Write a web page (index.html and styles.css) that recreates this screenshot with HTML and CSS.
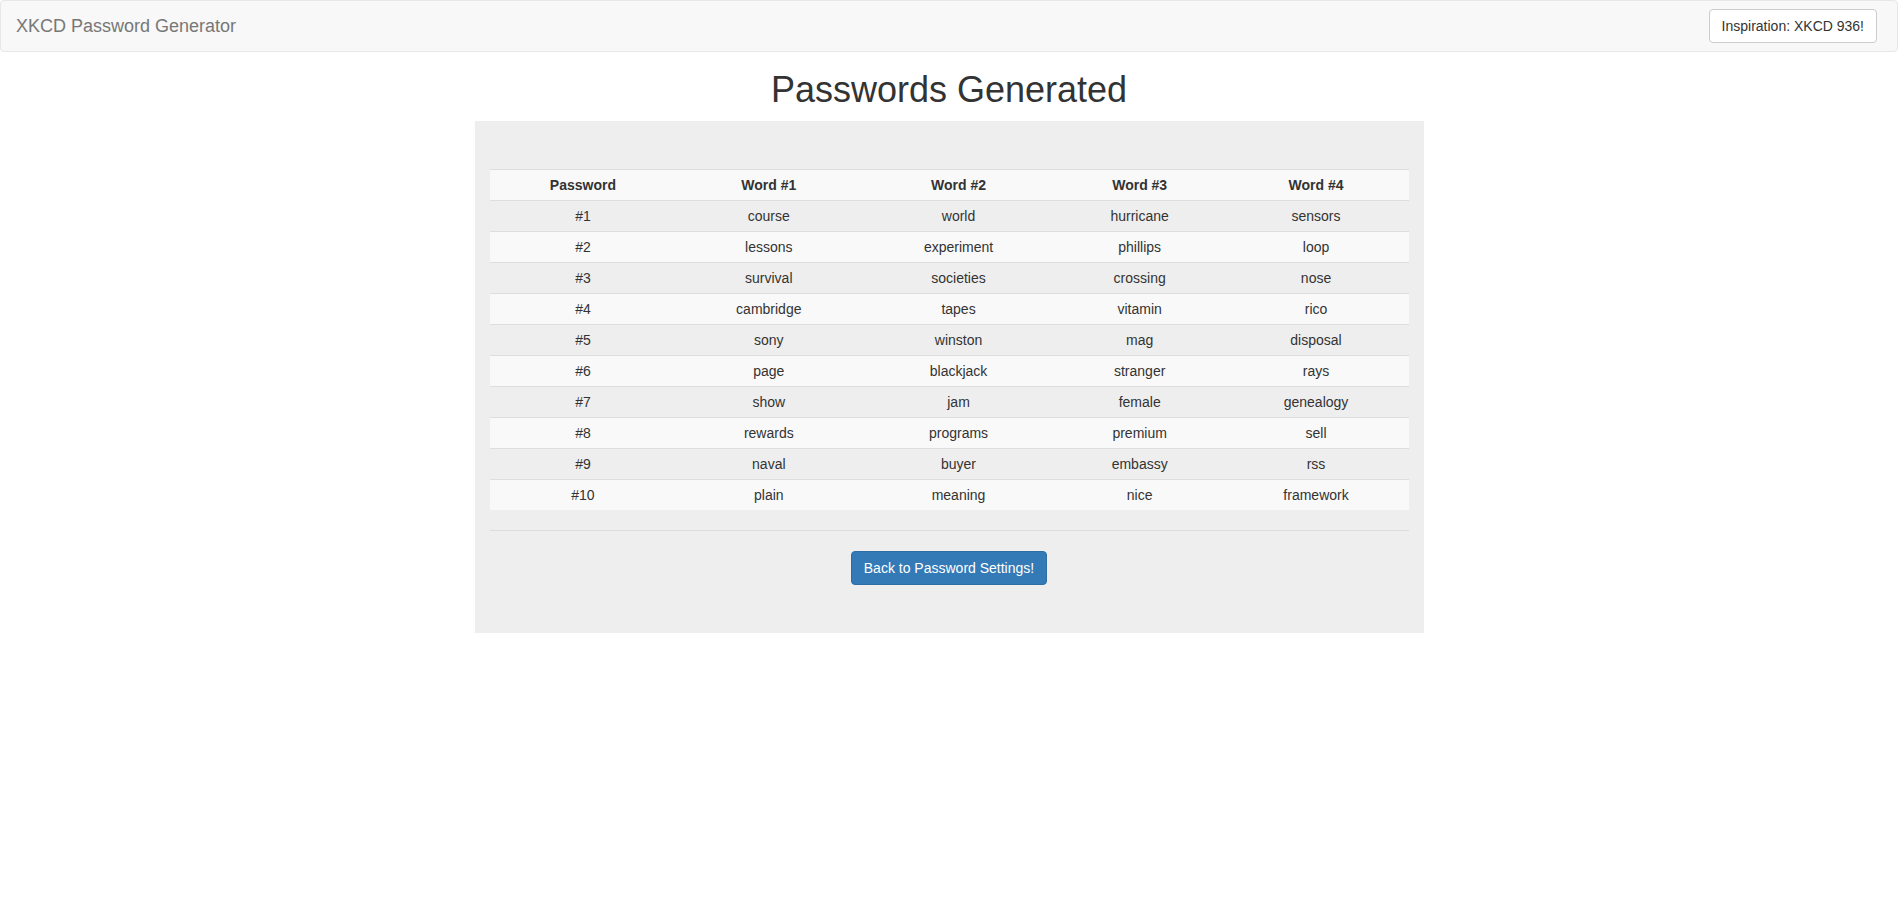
FILE: index.html
```html
<!DOCTYPE html>
<html lang="en">
<head>
<meta charset="utf-8">
<title>XKCD Password Generator</title>
<link rel="stylesheet" href="styles.css">
</head>
<body>
<nav class="navbar">
  <a class="brand" href="#">XKCD Password Generator</a>
  <button class="btn btn-default">Inspiration: XKCD 936!</button>
</nav>
<h1 class="title">Passwords Generated</h1>
<main class="wrap">
  <section class="panel">
    <table class="pw-table">
      <tbody>
        <tr><th>Password</th><th>Word #1</th><th>Word #2</th><th>Word #3</th><th>Word #4</th></tr>
        <tr><td>#1</td><td>course</td><td>world</td><td>hurricane</td><td>sensors</td></tr>
        <tr><td>#2</td><td>lessons</td><td>experiment</td><td>phillips</td><td>loop</td></tr>
        <tr><td>#3</td><td>survival</td><td>societies</td><td>crossing</td><td>nose</td></tr>
        <tr><td>#4</td><td>cambridge</td><td>tapes</td><td>vitamin</td><td>rico</td></tr>
        <tr><td>#5</td><td>sony</td><td>winston</td><td>mag</td><td>disposal</td></tr>
        <tr><td>#6</td><td>page</td><td>blackjack</td><td>stranger</td><td>rays</td></tr>
        <tr><td>#7</td><td>show</td><td>jam</td><td>female</td><td>genealogy</td></tr>
        <tr><td>#8</td><td>rewards</td><td>programs</td><td>premium</td><td>sell</td></tr>
        <tr><td>#9</td><td>naval</td><td>buyer</td><td>embassy</td><td>rss</td></tr>
        <tr><td>#10</td><td>plain</td><td>meaning</td><td>nice</td><td>framework</td></tr>
      </tbody>
    </table>
    <hr class="divider">
    <div class="actions">
      <button class="btn btn-primary">Back to Password Settings!</button>
    </div>
  </section>
</main>
</body>
</html>
```

FILE: styles.css
```css
* { box-sizing: border-box; }

html, body {
  margin: 0;
  padding: 0;
}

body {
  font-family: "Liberation Sans", Arial, Helvetica, sans-serif;
  font-size: 14px;
  line-height: 1.42857143;
  color: #333;
  background: #fff;
}

.navbar {
  display: flex;
  align-items: center;
  justify-content: space-between;
  min-height: 52px;
  background: #f8f8f8;
  border: 1px solid #e7e7e7;
  border-radius: 4px;
  padding: 0 20px 0 15px;
}

.brand {
  font-size: 18px;
  line-height: 20px;
  color: #777;
  text-decoration: none;
  padding: 15px 0;
}

.btn {
  font-family: inherit;
  font-size: 14px;
  line-height: 20px;
  padding: 6px 12px;
  border: 1px solid transparent;
  border-radius: 4px;
  cursor: pointer;
  display: inline-block;
}

.btn-default {
  background: #fff;
  color: #333;
  border-color: #ccc;
}

.btn-primary {
  background: #337ab7;
  color: #fff;
  border-color: #2e6da4;
}

.title {
  font-size: 36px;
  font-weight: 500;
  line-height: 1.1;
  text-align: center;
  margin: 18px 0 11px;
  color: #333;
}

.wrap {
  display: flex;
  justify-content: center;
}

.panel {
  width: 50%;
  background: #eee;
  padding: 48px 15px;
}

.pw-table {
  width: 100%;
  border-collapse: collapse;
  border-spacing: 0;
}

.pw-table th,
.pw-table td {
  padding: 5px;
  line-height: 20px;
  text-align: center;
  border-top: 1px solid #ddd;
  vertical-align: top;
}

.pw-table th {
  font-weight: bold;
}

.pw-table tr:nth-of-type(odd) {
  background: #f9f9f9;
}

.divider {
  margin: 20px 0;
  border: 0;
  border-top: 1px solid #ddd;
  height: 0;
}

.actions {
  display: flex;
  justify-content: center;
}
```
